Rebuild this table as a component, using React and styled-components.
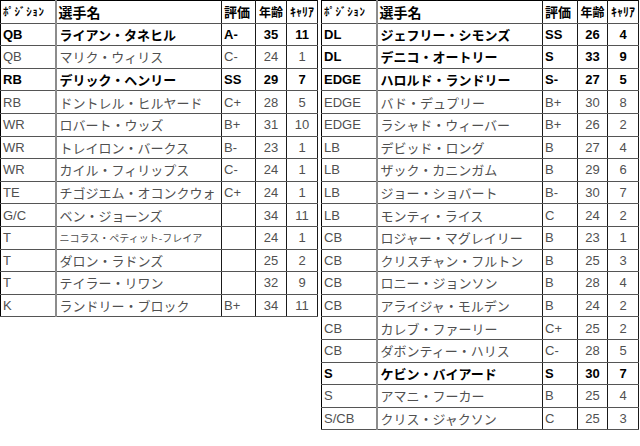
import React from 'react';
import styled, { createGlobalStyle } from 'styled-components';

const GlobalStyle = createGlobalStyle`
  body {
    margin: 0;
    background: #ffffff;
    font-family: "Liberation Sans", "Noto Sans CJK JP", sans-serif;
  }
`;

const Page = styled.div`
  display: flex;
  align-items: flex-start;
  gap: 3px;
  width: 640px;
  height: 446px;
  overflow: hidden;
`;

const Table = styled.table`
  border-collapse: collapse;
  table-layout: fixed;
  width: ${(p) => p.$width}px;
  border: 1px solid #000;
`;

const Row = styled.tr`
  height: 22.6px;
  color: ${(p) => (p.$bold ? '#000' : '#505050')};
  font-weight: ${(p) => (p.$bold ? 700 : 400)};
`;

const Cell = styled.td`
  padding: 0 0 0 ${(p) => (p.$center ? 0 : 2)}px;
  border-bottom: 1px solid #555;
  border-right: ${(p) => (p.$sep ? '2px solid #8c8c8c' : '1px solid #1a1a1a')};
  font-size: 13px;
  line-height: 1;
  text-align: ${(p) => (p.$center ? 'center' : 'left')};
  white-space: nowrap;
  overflow: hidden;
  vertical-align: middle;
`;

const NameCell = styled(Cell)`
  padding-left: 3px;
  font-family: "Noto Sans CJK JP", sans-serif;
  font-size: ${(p) => (p.$small ? 10 : 13)}px;
  letter-spacing: ${(p) => (p.$small ? 0 : 0)}px;
`;

const HeadCell = styled(Cell)`
  color: #000;
  font-weight: 700;
  font-family: "Noto Sans CJK JP", sans-serif;
  font-size: ${(p) => p.$size || 13}px;
  letter-spacing: ${(p) => p.$spacing || 0}px;
`;

const left = [
  ['QB', 'ライアン・タネヒル', 'A-', 35, 11, true],
  ['QB', 'マリク・ウィリス', 'C-', 24, 1],
  ['RB', 'デリック・ヘンリー', 'SS', 29, 7, true],
  ['RB', 'ドントレル・ヒルヤード', 'C+', 28, 5],
  ['WR', 'ロバート・ウッズ', 'B+', 31, 10],
  ['WR', 'トレイロン・バークス', 'B-', 23, 1],
  ['WR', 'カイル・フィリップス', 'C-', 24, 1],
  ['TE', 'チゴジエム・オコンクウォ', 'C+', 24, 1],
  ['G/C', 'ベン・ジョーンズ', '', 34, 11],
  ['T', 'ニコラス・ペティット-フレイア', '', 24, 1, false, true],
  ['T', 'ダロン・ラドンズ', '', 25, 2],
  ['T', 'テイラー・リワン', '', 32, 9],
  ['K', 'ランドリー・ブロック', 'B+', 34, 11],
];

const right = [
  ['DL', 'ジェフリー・シモンズ', 'SS', 26, 4, true],
  ['DL', 'デニコ・オートリー', 'S', 33, 9, true],
  ['EDGE', 'ハロルド・ランドリー', 'S-', 27, 5, true],
  ['EDGE', 'バド・デュプリー', 'B+', 30, 8],
  ['EDGE', 'ラシャド・ウィーバー', 'B+', 26, 2],
  ['LB', 'デビッド・ロング', 'B', 27, 4],
  ['LB', 'ザック・カニンガム', 'B', 29, 6],
  ['LB', 'ジョー・ショバート', 'B-', 30, 7],
  ['LB', 'モンティ・ライス', 'C', 24, 2],
  ['CB', 'ロジャー・マグレイリー', 'B', 23, 1],
  ['CB', 'クリスチャン・フルトン', 'B', 25, 3],
  ['CB', 'ロニー・ジョンソン', 'B', 28, 4],
  ['CB', 'アライジャ・モルデン', 'B', 24, 2],
  ['CB', 'カレブ・ファーリー', 'C+', 25, 2],
  ['CB', 'ダボンティー・ハリス', 'C-', 28, 5],
  ['S', 'ケビン・バイアード', 'S', 30, 7, true],
  ['S', 'アマニ・フーカー', 'B', 25, 4],
  ['S/CB', 'クリス・ジャクソン', 'C', 25, 3],
];

const Roster = ({ rows, cols }) => (
  <Table $width={cols.reduce((a, b) => a + b, 0)}>
    <colgroup>
      {cols.map((w, i) => (
        <col key={i} style={{ width: w }} />
      ))}
    </colgroup>
    <tbody>
      <Row>
        <HeadCell $sep $size={11} $spacing={0.6}>ﾎﾟｼﾞｼｮﾝ</HeadCell>
        <HeadCell $size={14}>選手名</HeadCell>
        <HeadCell>評価</HeadCell>
        <HeadCell $center $size={12}>年齢</HeadCell>
        <HeadCell $center $size={12}>ｷｬﾘｱ</HeadCell>
      </Row>
      {rows.map(([pos, name, grade, age, career, bold, small], i) => (
        <Row key={i} $bold={bold}>
          <Cell $sep>{pos}</Cell>
          <NameCell $small={small}>{name}</NameCell>
          <Cell>{grade}</Cell>
          <Cell $center>{age}</Cell>
          <Cell $center>{career}</Cell>
        </Row>
      ))}
    </tbody>
  </Table>
);

const App = () => (
  <Page>
    <GlobalStyle />
    <Roster rows={left} cols={[55, 166, 34, 31, 31]} />
    <Roster rows={right} cols={[55, 166, 35, 30, 31]} />
  </Page>
);

export default App;
